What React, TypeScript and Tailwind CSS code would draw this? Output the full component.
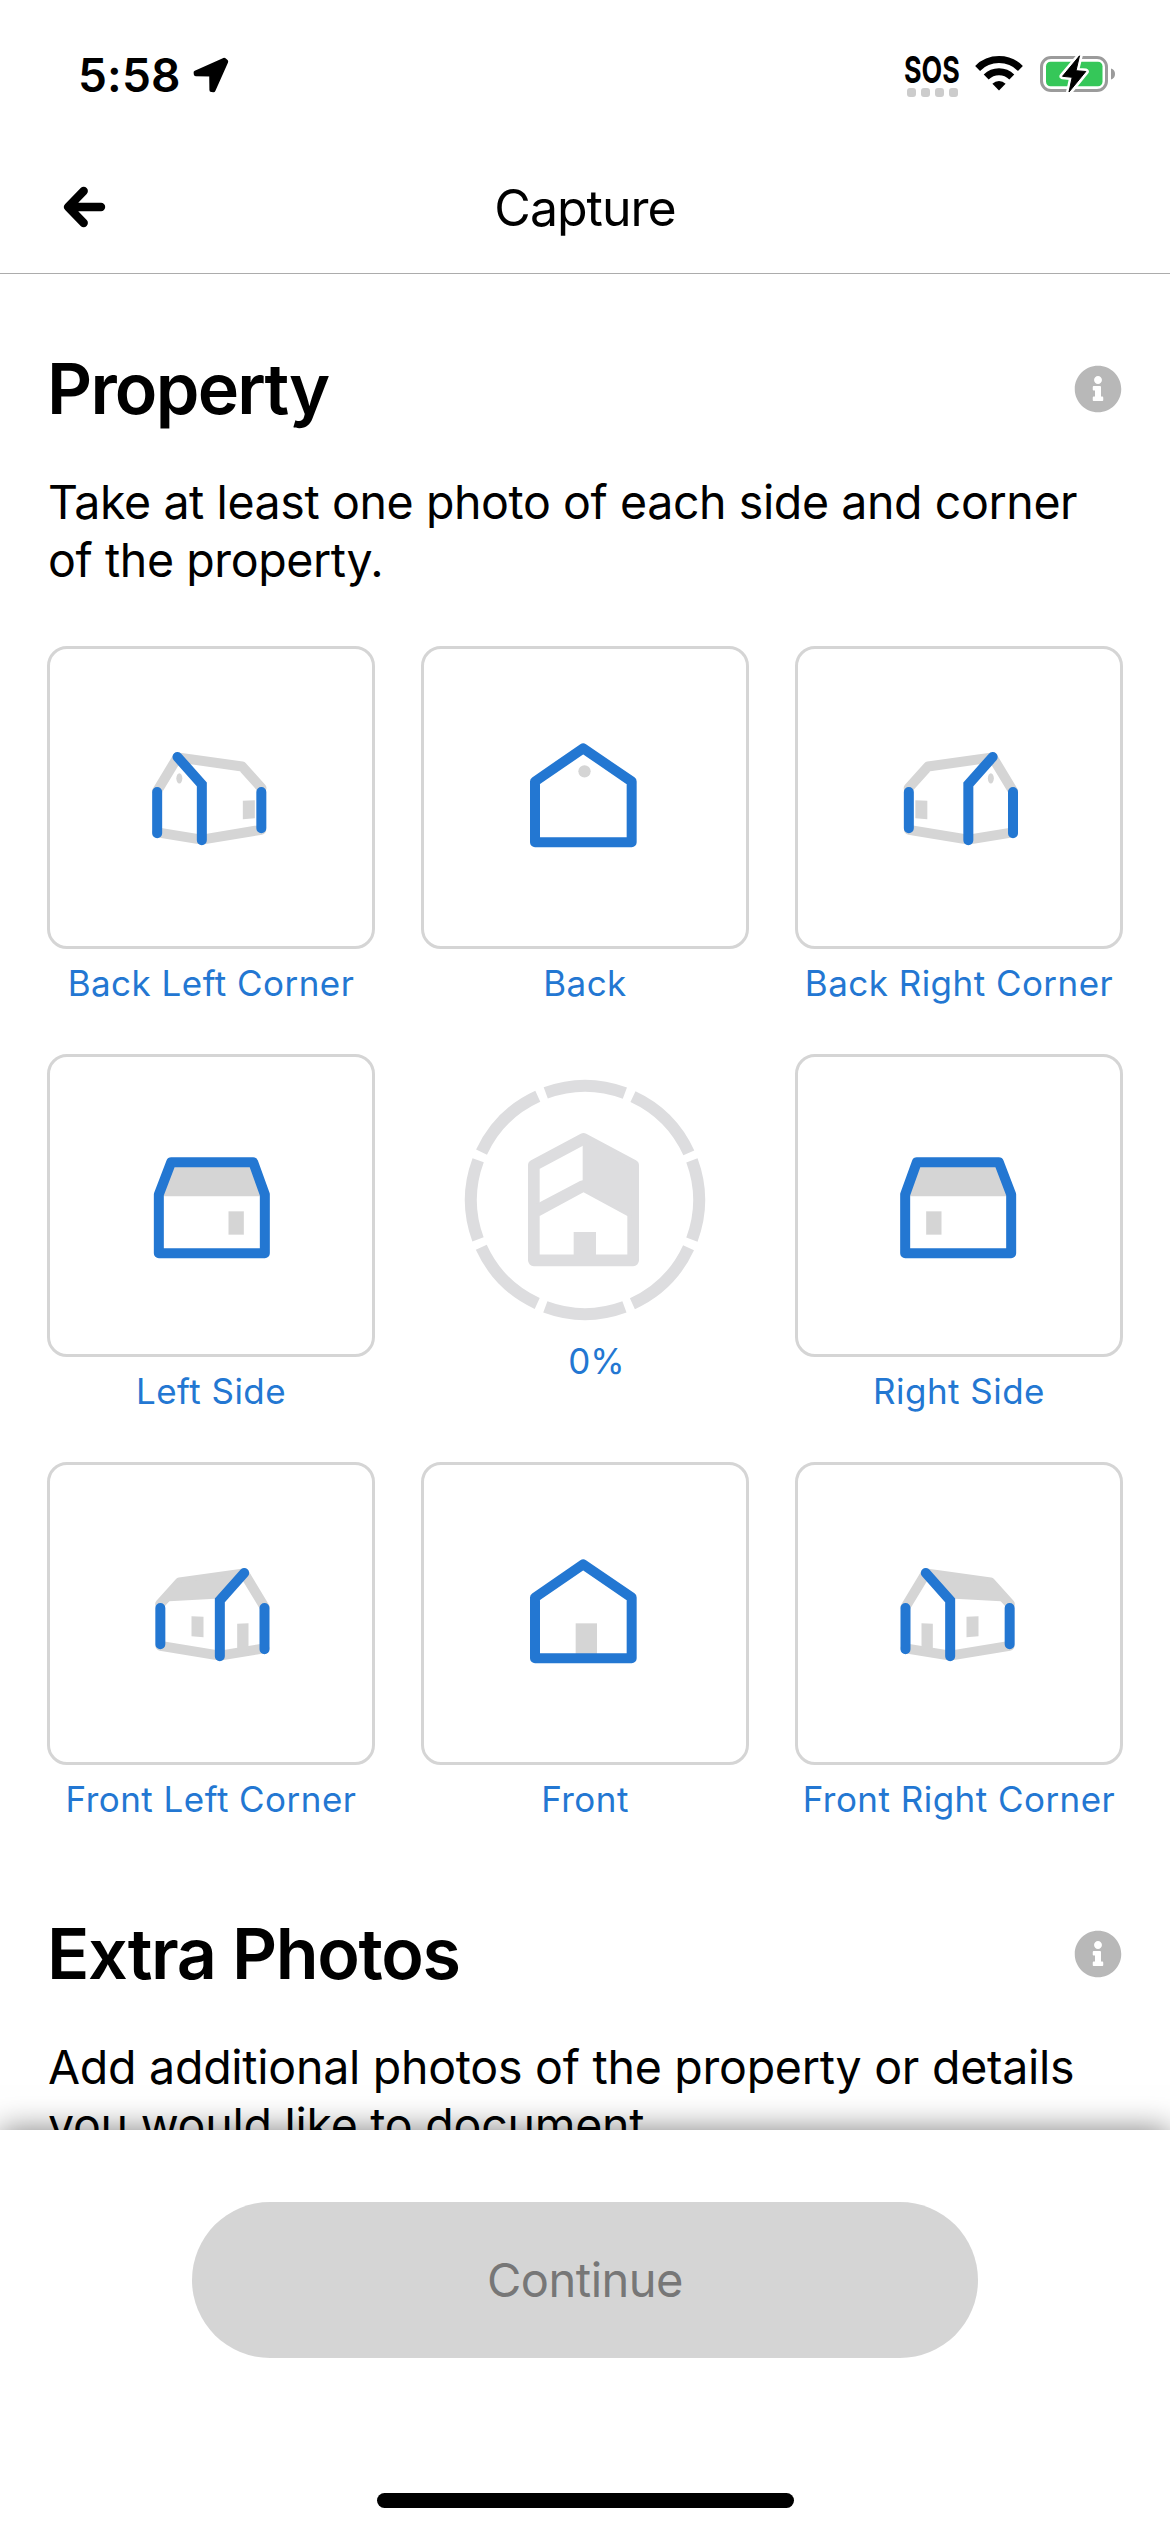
import React from "react";
import { FaInfoCircle } from "react-icons/fa";

const BLUE = "#2377d2";
const GREY = "#d5d5d5";

function StatusBar() {
  return (
    <div className="flex h-[141px] shrink-0 justify-between pr-[54px] pl-[78px]">
      <div className="flex h-[149px] items-center">
        <span className="w-[115px] text-[46px] leading-[56px] font-semibold tracking-[0.16px]">5:58</span>
        <svg width="36" height="36" viewBox="0 0 36 36">
          <path
            d="M31.2 2.8 33.2 4.6 20.5 33.2 18.4 33 18.2 18.2 17.5 17.6 2.8 17.3 2.6 15.6Z"
            fill="#000"
            stroke="#000"
            strokeWidth="4"
            strokeLinejoin="round"
          />
        </svg>
      </div>
      <div className="flex pt-[55px]">
        <div className="w-[54px]">
          <div className="-ml-px h-[33px] origin-left scale-x-[0.725] text-[37px] leading-[29px] font-bold whitespace-nowrap">
            SOS
          </div>
          <div className="flex gap-[5px] pl-[2px]">
            <span className="h-[9px] w-[9px] rounded-[3px] bg-[#cccccc]" />
            <span className="h-[9px] w-[9px] rounded-[3px] bg-[#cccccc]" />
            <span className="h-[9px] w-[9px] rounded-[3px] bg-[#cccccc]" />
            <span className="h-[9px] w-[9px] rounded-[3px] bg-[#cccccc]" />
          </div>
        </div>
        <svg className="ml-[16px]" width="48" height="36" viewBox="0 0 48 36">
          <path d="M2.6 13.4a30.4 30.4 0 0 1 42.8 0" fill="none" stroke="#000" strokeWidth="7" />
          <path d="M11.2 22a18.2 18.2 0 0 1 25.6 0" fill="none" stroke="#000" strokeWidth="7" />
          <path d="M24 35.4 17.4 28.8a9.4 9.4 0 0 1 13.2 0Z" fill="#000" />
        </svg>
        <svg className="ml-[17px]" width="76" height="39" viewBox="0 0 76 39">
          <rect x="1.5" y="2.5" width="65" height="33" rx="9.5" fill="none" stroke="#9b9b9b" strokeWidth="3" />
          <path d="M71 13.5c2.6.8 4 2.8 4 5.5s-1.4 4.7-4 5.5Z" fill="#9b9b9b" />
          <rect x="6" y="6.7" width="56.5" height="24.5" rx="4.5" fill="#35c759" />
          <path
            d="M39.7 .8 22.5 21.3 32.2 22.3 29 37.3 45.8 16.5 36 15.7Z"
            fill="#000"
            stroke="#fff"
            strokeWidth="6"
            strokeLinejoin="round"
          />
          <path
            d="M39.5 .8 22.5 21.3 32.2 22.3 29 37 45.8 16.5 36 15.7Z"
            fill="#000"
            stroke="#000"
            strokeWidth="1"
            strokeLinejoin="round"
          />
        </svg>
      </div>
    </div>
  );
}

function NavBar() {
  return (
    <header className="relative flex h-[133px] shrink-0 items-center justify-center border-b border-[#acacac] pt-[2px]">
      <svg className="absolute top-[43px] left-[62px]" width="45" height="46" viewBox="0 0 45 46">
        <path
          d="M21.7 7 6.2 23 21.7 39M8 23H39"
          fill="none"
          stroke="#000"
          strokeWidth="8.4"
          strokeLinecap="round"
          strokeLinejoin="round"
        />
      </svg>
      <h1 className="text-[50px] leading-[60px] tracking-[-1px]">Capture</h1>
    </header>
  );
}

function SectionHeading({ title, tracking }: { title: string; tracking: string }) {
  return (
    <div className="flex h-[84px] items-center justify-between">
      <h2 className={`text-[70px] leading-[84px] font-semibold ${tracking}`}>{title}</h2>
      <FaInfoCircle className="mr-px text-[#b8b8b8]" size={48} />
    </div>
  );
}

function CornerPosts() {
  return (
    <>
      <path d="M382 485V609M694.5 485V594" stroke={BLUE} strokeWidth="30" strokeLinecap="round" />
      <path d="M443 380 516 462V630" fill="none" stroke={BLUE} strokeWidth="30" strokeLinecap="round" />
    </>
  );
}

function CornerOutline() {
  return (
    <path
      d="M382 482 443 381 637 408.5 695 473M382 606 516 628 694 598.5"
      fill="none"
      stroke={GREY}
      strokeWidth="30"
      strokeLinejoin="round"
      strokeLinecap="round"
    />
  );
}

/* Left and right corner views share one drawing; the opposite side is flipped horizontally. */
function BackCorner() {
  return (
    <>
      <CornerOutline />
      <ellipse cx="448.5" cy="444" rx="9" ry="15.5" fill={GREY} />
      <path d="M639 511 675 510V564L639 567Z" fill={GREY} />
      <CornerPosts />
    </>
  );
}

function FrontCorner() {
  return (
    <>
      <CornerOutline />
      <path d="M443 381 637 408.5 690 470 678 473 668 465 530 457 516 462Z" fill={GREY} />
      <path d="M430 531 464 532V614L430 608Z" fill={GREY} />
      <path d="M565 511 601 510V570L565 573Z" fill={GREY} />
      <CornerPosts />
    </>
  );
}

function Gable({ children }: { children: React.ReactNode }) {
  return (
    <>
      {children}
      <path
        d="M375 636V453.5L519.5 354 665 453.5V636Z"
        fill="none"
        stroke={BLUE}
        strokeWidth="30"
        strokeLinejoin="round"
      />
    </>
  );
}

function SideView() {
  return (
    <>
      <path d="M390 468V455L424 366H670L702 455V468Z" fill={GREY} />
      <rect x="596" y="513.5" width="46" height="70" fill={GREY} />
      <path
        d="M387 639V463L424 366H670L705 463V639Z"
        fill="none"
        stroke={BLUE}
        strokeWidth="30"
        strokeLinejoin="round"
      />
    </>
  );
}

function Tile({ label, viewBox, children }: { label: string; viewBox: string; children: React.ReactNode }) {
  return (
    <div className="flex flex-col">
      <div className="flex h-[303px] items-center justify-center rounded-[20px] border-3 border-[#d5d5d5] bg-white">
        <svg width="160" height="140" viewBox={viewBox}>
          {children}
        </svg>
      </div>
      <div className="mt-[13px] text-center text-[35px] leading-[42px] tracking-[0.46px] whitespace-nowrap text-[#2377d2]">
        {label}
      </div>
    </div>
  );
}

function Progress() {
  return (
    <div className="flex flex-col items-center pt-[24px]">
      <svg width="244" height="244" viewBox="159 114 732 732">
        <circle
          cx="525"
          cy="480"
          r="342"
          fill="none"
          stroke="#dddddf"
          strokeWidth="36"
          pathLength={360}
          strokeDasharray="40.6 4.4"
          transform="rotate(-20.3 525 480)"
        />
        <path
          d="M371.5 661V376L520.5 296.5 669.5 376V661Z"
          fill="none"
          stroke="#dddddf"
          strokeWidth="35"
          strokeLinejoin="round"
        />
        <path d="M518 300 665 378V535L652 528 520.5 457 389 528 380 520V492L389 487 510 423 518 421Z" fill="#dddddf" />
        <rect x="491" y="576" width="67" height="80" fill="#dddddf" />
      </svg>
      <div className="mt-[18px] pl-[23px] text-[35px] leading-[42px] text-[#2377d2]">0%</div>
    </div>
  );
}

export default function App() {
  return (
    <div className="flex h-[2532px] w-[1170px] flex-col overflow-hidden bg-white font-['Inter',sans-serif] text-black">
      <StatusBar />
      <NavBar />

      <main className="min-h-0 flex-1 overflow-hidden px-[47px] pt-[73px]">
        <SectionHeading title="Property" tracking="tracking-[-1.77px]" />
        <p className="mt-[42px] pl-px text-[46.5px] leading-[58px] tracking-[-0.4px] whitespace-nowrap">
          Take at least one photo of each side and corner
          <br />
          of the property.
        </p>

        <div className="mt-[57px] grid grid-cols-3 gap-x-[46px] gap-y-[50px]">
          <Tile label="Back Left Corner" viewBox="303.5 293 480 420">
            <BackCorner />
          </Tile>
          <Tile label="Back" viewBox="285 293 480 420">
            <Gable>
              <circle cx="523.5" cy="423" r="18.5" fill={GREY} />
            </Gable>
          </Tile>
          <Tile label="Back Right Corner" viewBox="296 293 480 420">
            <g transform="matrix(-1 0 0 1 1080 0)">
              <BackCorner />
            </g>
          </Tile>

          <Tile label="Left Side" viewBox="303.5 287.5 480 420">
            <SideView />
          </Tile>
          <Progress />
          <Tile label="Right Side" viewBox="303.5 287.5 480 420">
            <g transform="matrix(-1 0 0 1 1087 0)">
              <SideView />
            </g>
          </Tile>

          <Tile label="Front Left Corner" viewBox="303.5 293 480 420">
            <g transform="matrix(-1 0 0 1 1086 0)">
              <FrontCorner />
            </g>
          </Tile>
          <Tile label="Front" viewBox="285 293 480 420">
            <Gable>
              <rect x="497" y="531" width="64" height="92" fill={GREY} />
            </Gable>
          </Tile>
          <Tile label="Front Right Corner" viewBox="302.5 293 480 420">
            <FrontCorner />
          </Tile>
        </div>

        <div className="mt-[92px]">
          <SectionHeading title="Extra Photos" tracking="tracking-[-1.35px]" />
          <p className="mt-[42px] pl-px text-[46.5px] leading-[58px] tracking-[-0.26px] whitespace-nowrap">
            Add additional photos of the property or details
            <br />
            you would like to document.
          </p>
        </div>
      </main>

      <footer className="relative flex h-[402px] shrink-0 flex-col items-center bg-white pt-[72px] shadow-[0_0_30px_rgba(0,0,0,0.5)]">
        <button className="h-[156px] w-[786px] rounded-full bg-[#d5d5d5] text-[47px] tracking-[-0.5px] text-[#777777]">
          Continue
        </button>
        <div className="mt-[135px] h-[15px] w-[417px] rounded-full bg-black" />
      </footer>
    </div>
  );
}
